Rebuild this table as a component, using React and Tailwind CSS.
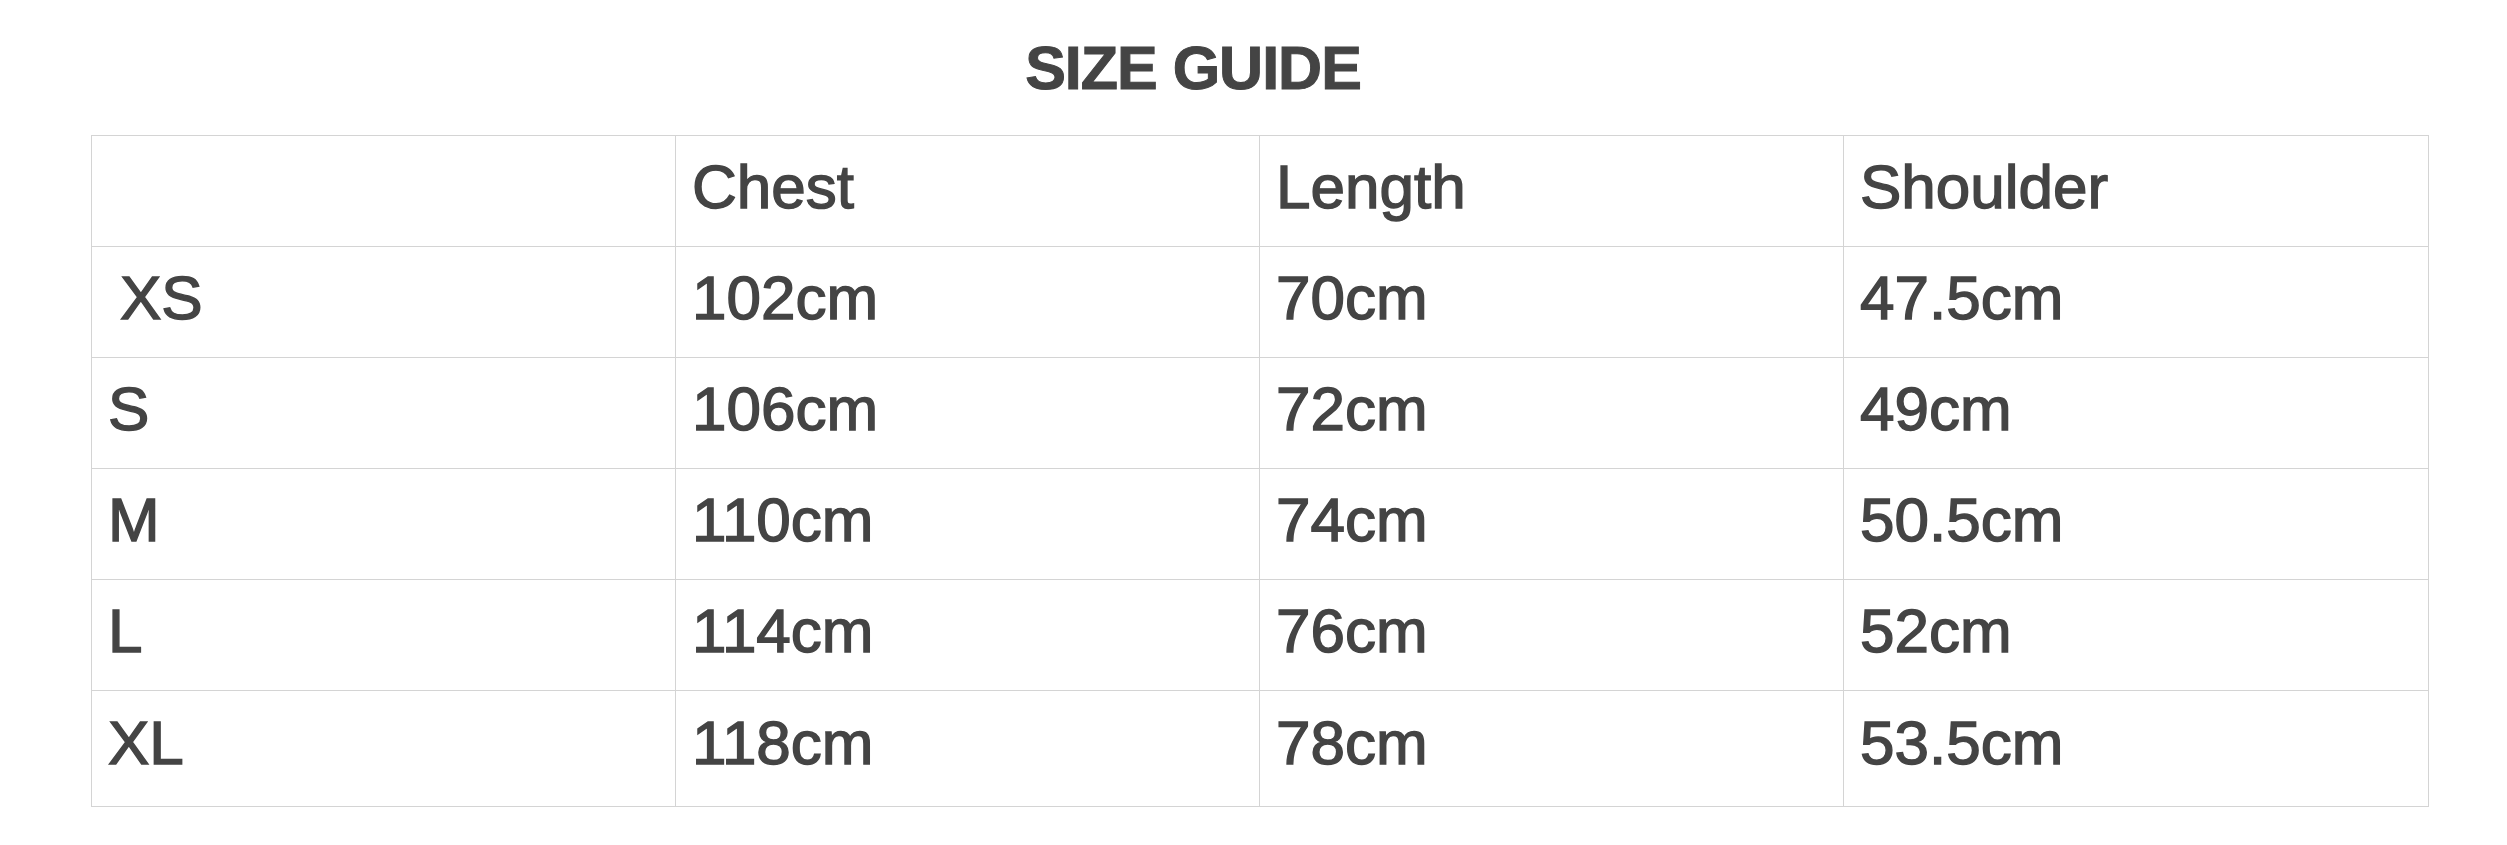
const columns = ["", "Chest", "Length", "Shoulder"];

const rows = [
  ["XS", "102cm", "70cm", "47.5cm"],
  ["S", "106cm", "72cm", "49cm"],
  ["M", "110cm", "74cm", "50.5cm"],
  ["L", "114cm", "76cm", "52cm"],
  ["XL", "118cm", "78cm", "53.5cm"],
];

const Cell = ({ children, last, tall, indent }) => (
  <div
    className={`flex items-center pl-[16px] ${tall ? "h-[115px] pb-[12px]" : "h-[110px] pb-[8px]"} ${last ? "" : "border-r border-[#d4d4d4]"}`}
  >
    <span
      className={`text-[62px] leading-[68px] text-[#444] [-webkit-text-stroke:1.4px_#444] ${indent ? "pl-[12px]" : ""}`}
    >
      {children}
    </span>
  </div>
);

export default function App() {
  return (
    <div className="min-h-screen bg-white font-['Liberation_Sans',Arial,sans-serif]">
      <div className="ml-[91px] w-[2338px] pt-[34px]">
        {/* Title */}
        <div className="flex justify-center pr-[134px] mb-[33px]">
          <h1 className="text-[61px] leading-[68px] font-bold tracking-[-1px] text-[#444] [-webkit-text-stroke:1px_#444]">
            SIZE GUIDE
          </h1>
        </div>

        {/* Table */}
        <div className="border border-[#d4d4d4]">
          <div className="grid grid-cols-4 border-b border-[#d4d4d4]">
            {columns.map((c, i) => (
              <Cell key={i} last={i === columns.length - 1}>
                {c}
              </Cell>
            ))}
          </div>
          {rows.map((r, ri) => (
            <div
              key={ri}
              className={`grid grid-cols-4 ${ri === rows.length - 1 ? "" : "border-b border-[#d4d4d4]"}`}
            >
              {r.map((v, i) => (
                <Cell
                  key={i}
                  last={i === r.length - 1}
                  tall={ri === rows.length - 1}
                  indent={ri === 0 && i === 0}
                >
                  {v}
                </Cell>
              ))}
            </div>
          ))}
        </div>
      </div>
    </div>
  );
}
